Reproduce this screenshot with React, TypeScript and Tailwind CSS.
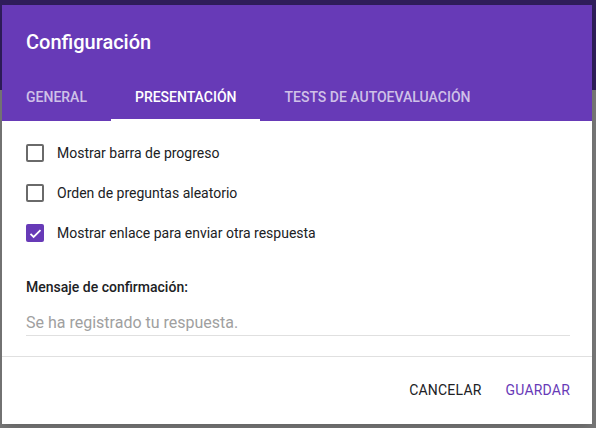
import React, { useState } from "react";

const tabs = ["General", "Presentación", "Tests de autoevaluación"];

const options = [
  { label: "Mostrar barra de progreso", checked: false },
  { label: "Orden de preguntas aleatorio", checked: false },
  { label: "Mostrar enlace para enviar otra respuesta", checked: true },
];

function Checkbox({ checked }: { checked: boolean }) {
  if (checked) {
    return (
      <span className="flex h-[18px] w-[18px] items-center justify-center rounded-[2px] bg-[#673ab7]">
        <svg viewBox="0 0 24 24" className="h-[15px] w-[15px]" fill="none">
          <path d="M4 12.5l5 5L20 6.5" stroke="white" strokeWidth="2.8" />
        </svg>
      </span>
    );
  }
  return <span className="h-[18px] w-[18px] rounded-[2px] border-2 border-[#6a6a6a]" />;
}

export default function App() {
  const [active, setActive] = useState(1);
  const [opts, setOpts] = useState(options);

  return (
    <div
      className="h-[428px] w-[596px] overflow-hidden bg-[linear-gradient(to_bottom,#2f1d5a_0,#2f1d5a_90px,#777777_90px)] pt-[5px] pl-[2px] pr-[4px] pb-[4px]"
      style={{ fontFamily: "Roboto, 'Liberation Sans', sans-serif" }}
    >
      <div className="flex h-[419px] w-[590px] flex-col bg-white shadow-lg">
        {/* Header */}
        <div className="bg-[#673ab7] pt-[23px]">
          <h1 className="px-6 text-[20px] leading-7 font-medium text-white">Configuración</h1>
          <nav className="mt-[17px] flex">
            {tabs.map((t, i) => (
              <button
                key={t}
                onClick={() => setActive(i)}
                className={
                  "relative h-12 px-6 text-[14px] font-medium uppercase " +
                  (i === active ? "text-white" : "text-white/70")
                }
              >
                {t}
                {i === active && <span className="absolute right-0 bottom-0 left-0 h-[2px] bg-white" />}
              </button>
            ))}
          </nav>
        </div>

        {/* Body */}
        <div className="px-6 pt-[12px]">
          {opts.map((o, i) => (
            <label
              key={o.label}
              className="flex h-10 cursor-pointer items-center gap-[13px]"
              onClick={() =>
                setOpts(opts.map((x, j) => (j === i ? { ...x, checked: !x.checked } : x)))
              }
            >
              <Checkbox checked={o.checked} />
              <span className="text-[14px] text-[#202124]">{o.label}</span>
            </label>
          ))}

          <div className="mt-6 text-[14px] leading-5 font-medium text-[#202124]">
            Mensaje de confirmación:
          </div>
          <input
            className="mt-[13px] block h-[26px] w-[544px] border-b border-[#e0e0e0] text-[16px] text-[#202124] outline-none placeholder:text-[#a0a0a0]"
            placeholder="Se ha registrado tu respuesta."
          />
        </div>

        <div className="mt-5 h-px bg-[#e0e0e0]" />

        {/* Footer */}
        <div className="flex items-center justify-end gap-6 pt-[15px] pr-[22px]">
          <button className="h-9 text-[14px] tracking-[0.2px] text-[#202124]">CANCELAR</button>
          <button className="h-9 text-[14px] tracking-[0.2px] text-[#673ab7]">GUARDAR</button>
        </div>
      </div>
    </div>
  );
}
